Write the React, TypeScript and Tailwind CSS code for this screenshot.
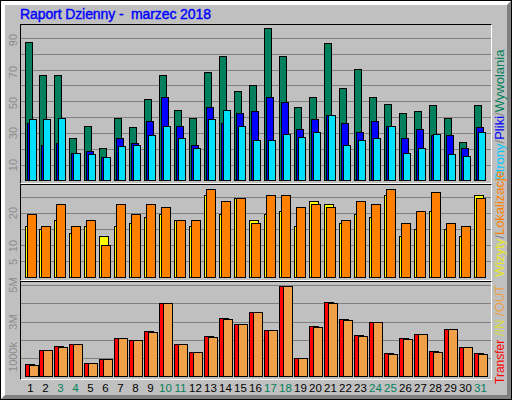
import React from "react";

const days = Array.from({ length: 31 }, (_, i) => i);
const barX = (i: number) => (i === 0 ? 25 : 24 + i * 15);
const weekend = [3, 4, 10, 11, 17, 18, 24, 25, 31];

const hits = [42, 75, 75, 138, 126, 148, 118, 127, 99, 75, 110, 118, 72, 56, 91, 85, 28, 56, 107, 97, 43, 88, 69, 97, 104, 113, 111, 105, 118, 142, 105];
const files = [123, 145, 143, 153, 151, 157, 138, 143, 121, 97, 126, 145, 107, 123, 113, 111, 97, 102, 129, 119, 115, 123, 132, 121, 126, 138, 129, 135, 135, 148, 127];
const pages = [119, 119, 118, 153, 154, 157, 146, 145, 135, 126, 138, 148, 119, 110, 126, 140, 140, 134, 137, 132, 115, 145, 140, 138, 126, 153, 148, 134, 154, 156, 132];
const visits = [226, 229, 220, 233, 226, 236, 226, 223, 217, 214, 220, 226, 195, 214, 198, 220, 214, 211, 226, 201, 204, 223, 214, 217, 195, 236, 229, 211, 229, 236, 195];
const sites = [214, 226, 204, 226, 220, 245, 204, 214, 204, 207, 220, 220, 189, 201, 198, 223, 195, 195, 207, 204, 207, 220, 201, 204, 189, 223, 211, 192, 223, 226, 198];
const kIn = [364, 350, 346, 344, 363, 359, 338, 340, 331, 303, 344, 352, 336, 318, 324, 312, 330, 286, 358, 326, 302, 319, 335, 322, 353, 338, 334, 351, 329, 347, 353];
const kOut = [365, 350, 347, 344, 363, 359, 338, 340, 332, 303, 344, 352, 337, 319, 324, 312, 330, 286, 358, 327, 303, 320, 336, 322, 354, 339, 334, 352, 329, 347, 354];

type Series = { tops: number[]; dx: number; w: number; fill: string };

function Chart({ top, height, grid, bottom, series, ticks }: { top: number; height: number; grid: number[]; bottom: number; series: Series[]; ticks: [string, number][] }) {
  return (
    <div className="flex" style={{ height }}>
      <svg width={15} height={height} viewBox={`5 ${top} 15 ${height}`} className="shrink-0 overflow-visible">
        {ticks.map(([t, y]) => (
          <text key={t} transform={`translate(17 ${y}) rotate(-90)`} textAnchor="middle" fontSize={11} fill="#8c8c8c" fontFamily="'Liberation Sans', sans-serif">
            {t}
          </text>
        ))}
      </svg>
      <div className="w-[472px] border-t border-l border-t-black border-l-black border-r border-b border-r-white border-b-white overflow-hidden">
        <svg width={470} height={height - 2} viewBox={`21 ${top + 1} 470 ${height - 2}`} className="block" shapeRendering="crispEdges">
          {grid.map((y) => (
            <rect key={y} x={21} y={y} width={470} height={1} fill="#808080" />
          ))}
          {series.map((s) =>
            days.map((i) => (
              <rect key={s.fill + i} x={barX(i) + s.dx + 0.5} y={s.tops[i] + 0.5} width={s.w - 1} height={bottom - s.tops[i]} fill={s.fill} stroke="#000" strokeWidth={1} />
            ))
          )}
        </svg>
      </div>
    </div>
  );
}

function Legend({ height, items }: { height: number; items: [string, string, number?][] }) {
  return (
    <div className="flex flex-col justify-end overflow-visible" style={{ height }}>
      <div className="h-0 overflow-visible">
        <div className="[writing-mode:vertical-rl] rotate-180 whitespace-pre text-[13px] leading-[14px] w-[14px] h-[140px] -translate-y-[140px]">
          {items.map(([t, c, s], k) => (
            <span key={k} style={{ color: c, fontSize: s }}>
              {t}
            </span>
          ))}
        </div>
      </div>
    </div>
  );
}

export default function App() {
  return (
    <div className="w-[512px] h-[400px] border border-black bg-white font-['Liberation_Sans',Arial,sans-serif]">
      <div className="w-[510px] h-[398px] border-4 border-t-white border-l-white border-r-[#808080] border-b-[#808080] bg-[#c0c0c0]">
        <div className="h-[19px] pl-[15px] text-[14px] leading-[18px] tracking-[-0.1px] text-[#0000ff] whitespace-pre [-webkit-text-stroke:0.4px_#0000ff]">
          Raport Dzienny -  marzec 2018
        </div>
        <div className="flex">
          <div className="w-[487px] flex flex-col">
            <Chart
              top={24}
              height={160}
              bottom={180}
              grid={[38, 54, 70, 85, 101, 117, 133, 149, 165]}
              series={[
                { tops: hits, dx: 0, w: 8, fill: "#00805c" },
                { tops: files, dx: 2, w: 8, fill: "#0000ff" },
                { tops: pages, dx: 4, w: 8, fill: "#00e0ff" },
              ]}
              ticks={[["90", 40], ["70", 72], ["50", 103], ["30", 133], ["10", 165]]}
            />
            <Chart
              top={184}
              height={97}
              bottom={277}
              grid={[197, 213, 229, 245, 261]}
              series={[
                { tops: visits, dx: 0, w: 10, fill: "#ffff00" },
                { tops: sites, dx: 2, w: 10, fill: "#ff8000" },
              ]}
              ticks={[["20", 213], ["10", 246], ["5", 262]]}
            />
            <Chart
              top={281}
              height={99}
              bottom={376}
              grid={[285, 303, 322, 340, 358]}
              series={[
                { tops: kIn, dx: 0, w: 10, fill: "#ff0000" },
                { tops: kOut, dx: 4, w: 10, fill: "#f0a048" },
              ]}
              ticks={[["5M", 285], ["3M", 322], ["1000k", 357]]}
            />
            <div className="flex pl-[18px] pt-[1px] text-[11.5px] leading-[14px]">
              {days.map((i) => (
                <span key={i} className={`w-[15px] text-center shrink-0 ${weekend.includes(i + 1) ? "text-[#00805c]" : "text-black"}`}>
                  {i + 1}
                </span>
              ))}
            </div>
          </div>
          <div className="w-[14px] ml-[1px] flex flex-col">
            <Legend height={157} items={[["Strony", "#00c8ff"], ["/", "#808080"], ["Pliki", "#0000ff"], ["/", "#808080"], ["Wywolania", "#00805c"]]} />
            <Legend height={96} items={[["Wizyty", "#e8e820"], ["/", "#808080"], ["Lokalizacje", "#ff8000"]]} />
            <Legend height={107} items={[["Transfer", "#ff0000", 12], [" /", "#d8d840"], ["IN", "#d8d840"], [" /", "#f0a048"], ["OUT", "#f0a048"]]} />
          </div>
        </div>
      </div>
    </div>
  );
}
